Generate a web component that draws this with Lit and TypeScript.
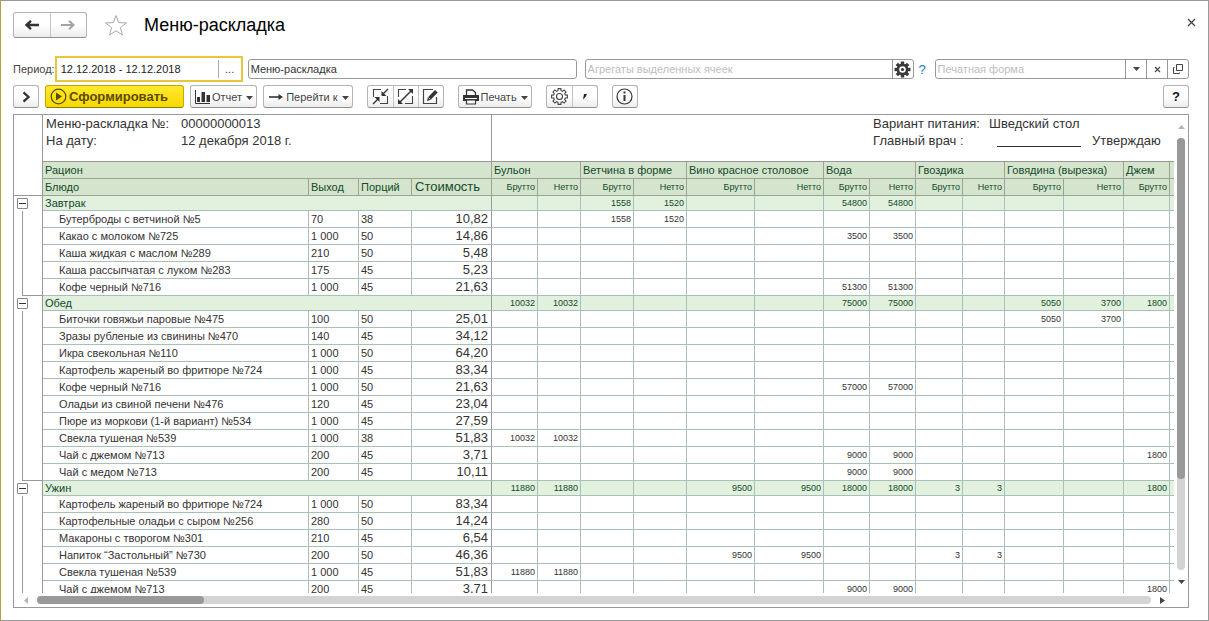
import { LitElement, html, svg, css, nothing } from "lit";
import { customElement, state } from "lit/decorators.js";

interface Dish {
  name: string;
  output: string;
  portions: string;
  cost: string;
  amounts?: Record<number, string>;
}

interface Meal {
  name: string;
  totals: Record<number, string>;
  dishes: Dish[];
}

const INGREDIENTS = [
  { name: "Бульон", span: 2 },
  { name: "Ветчина в форме", span: 2 },
  { name: "Вино красное столовое", span: 2 },
  { name: "Вода", span: 2 },
  { name: "Гвоздика", span: 2 },
  { name: "Говядина (вырезка)", span: 2 },
  { name: "Джем", span: 1 },
];

const AMOUNT_WIDTHS = [46, 43, 53, 53, 68, 69, 46, 46, 47, 42, 59, 60, 46];
const COLUMN_WIDTHS = [29, 266, 50, 53, 80, ...AMOUNT_WIDTHS];

const dish = (
  name: string,
  output: string,
  portions: string,
  cost: string,
  amounts: Record<number, string> = {}
): Dish => ({ name, output, portions, cost, amounts });

const MEALS: Meal[] = [
  {
    name: "Завтрак",
    totals: { 2: "1558", 3: "1520", 6: "54800", 7: "54800" },
    dishes: [
      dish("Бутерброды с ветчиной №5", "70", "38", "10,82", { 2: "1558", 3: "1520" }),
      dish("Какао с молоком №725", "1 000", "50", "14,86", { 6: "3500", 7: "3500" }),
      dish("Каша жидкая с маслом №289", "210", "50", "5,48"),
      dish("Каша рассыпчатая с луком №283", "175", "45", "5,23"),
      dish("Кофе черный №716", "1 000", "45", "21,63", { 6: "51300", 7: "51300" }),
    ],
  },
  {
    name: "Обед",
    totals: { 0: "10032", 1: "10032", 6: "75000", 7: "75000", 10: "5050", 11: "3700", 12: "1800" },
    dishes: [
      dish("Биточки говяжьи паровые №475", "100", "50", "25,01", { 10: "5050", 11: "3700" }),
      dish("Зразы рубленые из свинины №470", "140", "45", "34,12"),
      dish("Икра свекольная №110", "1 000", "50", "64,20"),
      dish("Картофель жареный во фритюре №724", "1 000", "45", "83,34"),
      dish("Кофе черный №716", "1 000", "50", "21,63", { 6: "57000", 7: "57000" }),
      dish("Оладьи из свиной печени №476", "120", "45", "23,04"),
      dish("Пюре из моркови (1-й вариант) №534", "1 000", "45", "27,59"),
      dish("Свекла тушеная №539", "1 000", "38", "51,83", { 0: "10032", 1: "10032" }),
      dish("Чай с джемом №713", "200", "45", "3,71", { 6: "9000", 7: "9000", 12: "1800" }),
      dish("Чай с медом №713", "200", "45", "10,11", { 6: "9000", 7: "9000" }),
    ],
  },
  {
    name: "Ужин",
    totals: { 0: "11880", 1: "11880", 4: "9500", 5: "9500", 6: "18000", 7: "18000", 8: "3", 9: "3", 12: "1800" },
    dishes: [
      dish("Картофель жареный во фритюре №724", "1 000", "50", "83,34"),
      dish("Картофельные оладьи с сыром №256", "280", "50", "14,24"),
      dish("Макароны с творогом №301", "210", "45", "6,54"),
      dish("Напиток “Застольный” №730", "200", "50", "46,36", { 4: "9500", 5: "9500", 8: "3", 9: "3" }),
      dish("Свекла тушеная №539", "1 000", "45", "51,83", { 0: "11880", 1: "11880" }),
      dish("Чай с джемом №713", "200", "45", "3,71", { 6: "9000", 7: "9000", 12: "1800" }),
    ],
  },
];

const icon = (w: number, h: number, body: unknown) =>
  html`<svg width=${w} height=${h} viewBox="0 0 ${w} ${h}" fill="none" aria-hidden="true">${body}</svg>`;

const teeth = (cx: number, cy: number, r: number, w: number, h: number, fill: string) =>
  [0, 45, 90, 135, 180, 225, 270, 315].map(
    (a) => svg`<rect x=${cx - w / 2} y=${cy - r} width=${w} height=${h} fill=${fill} transform="rotate(${a} ${cx} ${cy})"/>`
  );

const gearOutline = () => {
  const pts: string[] = [];
  for (let i = 0; i < 8; i++) {
    for (const [off, r] of [[-15, 6], [-10, 8], [10, 8], [15, 6]]) {
      const a = ((i * 45 + off - 90) * Math.PI) / 180;
      pts.push(`${(8.5 + r * Math.cos(a)).toFixed(2)},${(8.5 + r * Math.sin(a)).toFixed(2)}`);
    }
  }
  return pts.join(" ");
};

const ICONS = {
  back: icon(16, 12, svg`<path d="M15 6H3M7 1.8 2.5 6 7 10.2" stroke="#333" stroke-width="2.4"/>`),
  forward: icon(16, 12, svg`<path d="M1 6h12M9 1.8 13.5 6 9 10.2" stroke="#a3a3a3" stroke-width="2"/>`),
  star: icon(24, 22, svg`<path d="M12 1.5 14.7 8.6l7.8.3-6.1 4.8 2.1 7.3L12 16.8 5.500 21l2.100-7.300L1.500 8.900l7.800-.3z" stroke="#a8a8a8"/>`),
  close: icon(9, 9, svg`<path d="m1 1 7 7M8 1 1 8" stroke="#444" stroke-width="1.3"/>`),
  closeSmall: icon(7, 7, svg`<path d="m1 1 5 5M6 1 1 6" stroke="#444" stroke-width="1.1"/>`),
  caret: icon(7, 4, svg`<path d="M0 0h7L3.5 4z" fill="#444"/>`),
  open: icon(10, 10, svg`<path d="M3.5.5h6v6h-6zM1.5 3.5h-1v6h6v-1" stroke="#444"/>`),
  gearSolid: icon(
    17,
    17,
    svg`${teeth(8.5, 8.5, 8, 3.4, 4, "#3a3a3a")}<circle cx="8.5" cy="8.5" r="4.6" stroke="#3a3a3a" stroke-width="2.6"/><circle cx="8.5" cy="8.5" r="1.6" fill="#3a3a3a"/>`
  ),
  gear: icon(17, 17, svg`<polygon points=${gearOutline()} stroke="#444" stroke-width="1.1"/><circle cx="8.5" cy="8.5" r="3" stroke="#444" stroke-width="1.1"/>`),
  chevron: icon(9, 12, svg`<path d="m1.5 1.3 5 4.7-5 4.7" stroke="#333" stroke-width="2.3"/>`),
  play: icon(17, 17, svg`<circle cx="8.5" cy="8.5" r="7.3" stroke="#5c5210" stroke-width="1.3"/><path d="M6 4.5 12 8.5 6 12.5z" fill="#5c4a00"/>`),
  chart: icon(17, 14, svg`<path d="M1.5 0v13.5H16" stroke="#333"/><path d="M3 7h3v5H3zM7.5 2H11v10H7.500zM12.5 5H16v7h-3.500z" fill="#333"/>`),
  arrow: icon(18, 8, svg`<path d="M2 4h11" stroke="#333" stroke-width="1.6"/><path d="M11.5 1 16 4 11.5 7z" fill="#333"/>`),
  collapse: icon(
    17,
    17,
    svg`<path d="M9 1.5H1.500V9M15.5 8v7.500H8" stroke="#444" stroke-width="1.1"/><path d="M16 1 11 6M1 16 6 11" stroke="#333" stroke-width="1.4"/><path d="M9.500 3v5h5zM7.500 14V9h-5z" fill="#333"/>`
  ),
  expand: icon(
    17,
    17,
    svg`<path d="M9 1.5H1.500V9M15.5 8v7.500H8" stroke="#444" stroke-width="1.1"/><path d="M3 14 14 3" stroke="#333" stroke-width="1.4"/><path d="M11 1h5v5zM1 11v5h5z" fill="#333"/>`
  ),
  edit: icon(
    17,
    17,
    svg`<path d="M11 1.5H1.500v14h13V9" stroke="#444" stroke-width="1.2"/><path d="m5 13 1-3.800L13 2l2.700 2.500-7 7.300z" fill="#333"/><path d="m6.300 9.300 2.200 2.200" stroke="#fff" stroke-width=".7"/>`
  ),
  printer: icon(
    18,
    16,
    svg`<path d="M4.500 6V1h6l3 2.500V6" stroke="#333" stroke-width="1.3"/><path d="M1 6h16v6H1z" fill="#333"/><path d="M3 9.500h12" stroke="#fff"/><path d="M4.500 11h9v4h-9z" fill="#fff" stroke="#333" stroke-width="1.2"/>`
  ),
  tick: icon(4, 6, svg`<path d="M1 0h3L2.500 3 0 5.500z" fill="#222"/>`),
  info: icon(17, 17, svg`<circle cx="8.5" cy="8.5" r="7.5" stroke="#333" stroke-width="1.2"/><path d="M7.500 3.500h2v2h-2zM7.500 7h2v6h-2z" fill="#333"/>`),
  up: icon(7, 4, svg`<path d="M0 4h7L3.500 0z" fill="#b5b5b5"/>`),
  left: icon(4, 7, svg`<path d="M4 0v7L0 3.500z" fill="#b5b5b5"/>`),
  right: icon(5, 7, svg`<path d="M0 0v7L5 3.500z" fill="#444"/>`),
};

@customElement("app-root")
export class AppRoot extends LitElement {
  static styles = css`
    :host {
      display: block;
      height: 100vh;
      font-family: "Liberation Sans", Arial, sans-serif;
      font-size: 11px;
      color: #444;
    }
    *,
    *::before {
      box-sizing: border-box;
    }
    svg {
      display: block;
      flex: none;
    }
    button,
    input {
      font: inherit;
      color: inherit;
      margin: 0;
      padding: 0;
    }
    button {
      display: flex;
      align-items: center;
      justify-content: center;
      border: 0;
      background: none;
      white-space: nowrap;
    }
    input {
      border: 0;
      outline: 0;
      background: none;
      min-width: 0;
      flex: 1;
      padding: 0 2px;
      height: 100%;
    }
    input::placeholder {
      color: #bdbdbd;
      opacity: 1;
    }
    .window {
      display: flex;
      flex-direction: column;
      height: 100%;
      background: #fff;
      border: 1px solid #9a9a9a;
      border-left-color: #b3a33a;
      padding: 11px 19px 12px 12px;
    }
    .title-bar {
      display: flex;
      align-items: center;
      height: 26px;
    }
    .title-bar h1 {
      flex: 1;
      margin: 0 0 0 16px;
      font-size: 18px;
      font-weight: 400;
      line-height: 26px;
      color: #000;
    }
    .star {
      margin-left: 17px;
    }
    .close {
      width: 15px;
      height: 15px;
      margin: 0 -10px 6px 0;
    }
    .group {
      display: flex;
      border: 1px solid #b4b4b4;
      border-bottom-color: #8f8f8f;
      border-radius: 3px;
      background: linear-gradient(#fff 50%, #ececec);
    }
    .group button + button {
      border-left: 1px solid #c4c4c4;
    }
    .nav {
      height: 26px;
      width: 74px;
    }
    .nav button {
      flex: 1;
    }
    .fields {
      display: flex;
      align-items: center;
      height: 26px;
      margin-top: 18px;
    }
    .field {
      display: flex;
      align-items: stretch;
      height: 20px;
      border: 1px solid #999;
      border-radius: 3px;
      min-width: 0;
    }
    .field button {
      width: 21px;
      border-left: 1px solid #999;
    }
    .period {
      width: 188px;
      height: 26px;
      margin-right: 5px;
      border: 2px solid #e6c73c;
      border-radius: 0;
      padding: 2px 0;
    }
    .period input {
      padding-left: 4px;
      color: #222;
    }
    .period button {
      width: 23px;
      height: 18px;
      border-color: #aaa;
    }
    .variant {
      flex: 329 1 0;
      margin-right: 8px;
      color: #333;
    }
    .totals {
      flex: 329 1 0;
    }
    .form {
      flex: 254 1 0;
    }
    .hint {
      width: 21px;
      padding-right: 4px;
      color: #1a78b8;
      font-size: 13px;
    }
    .tools {
      display: flex;
      align-items: center;
      gap: 6px;
      height: 23px;
      margin: 3px 0 6px;
    }
    .tools .group {
      height: 23px;
    }
    .tools button {
      width: 25px;
    }
    .tools .single button {
      width: 24px;
    }
    .tools .menu {
      width: auto;
      gap: 1px;
      padding: 0 3px;
    }
    .tools .menu svg:last-child {
      margin: 3px 0 0 3px;
    }
    .apart {
      margin-left: 8px;
    }
    .primary {
      border-color: #c9a800;
      border-bottom-color: #8f7a10;
      background: linear-gradient(#ffe92e, #f7d800);
      color: #5c4a00;
      font-size: 13px;
      font-weight: 700;
    }
    .tools .primary button {
      width: 137px;
      gap: 2px;
      padding: 0 4px;
      justify-content: flex-start;
    }
    .help {
      margin-left: auto;
      color: #111;
      font-size: 13px;
      font-weight: 700;
    }
    .sheet {
      flex: 1;
      min-height: 0;
      display: grid;
      grid-template-columns: minmax(0, 1fr) 14px;
      grid-template-rows: minmax(0, 1fr) 14px;
      border: 1px solid #999;
    }
    .view {
      overflow: hidden;
    }
    table {
      width: 100%;
      table-layout: fixed;
      border-collapse: separate;
      border-spacing: 0;
      color: #333;
    }
    th,
    td {
      padding: 0 2px;
      height: 17px;
      line-height: 16px;
      font-weight: 400;
      text-align: left;
      white-space: nowrap;
      overflow: hidden;
      border: 0 solid #a9bfba;
      border-width: 0 1px 1px 0;
    }
    .caption th {
      height: 47px;
      padding: 0 3px;
      vertical-align: top;
      font-size: 13px;
      line-height: 17px;
      border-color: #999;
    }
    .caption .open {
      border-right: 0;
    }
    .caption-grid {
      display: grid;
      grid-template-columns: 135px 1fr;
    }
    .caption-grid.right {
      grid-template-columns: 116px 1fr;
    }
    .sign {
      display: flex;
      gap: 11px;
      padding-left: 8px;
    }
    .sign i {
      width: 84px;
      height: 15px;
      border-bottom: 1px solid #333;
    }
    .head th {
      background: #d5e5cd;
      color: #124a2b;
      border-color: #9ba392;
    }
    .head .wide {
      padding-left: 3px;
      font-size: 13px;
    }
    .meal td {
      height: 15px;
      line-height: 14px;
      background: #e2f0de;
      color: #124a2b;
    }
    .meal .name {
      border-right-color: #999;
    }
    .dish {
      padding-left: 16px;
    }
    td.cost {
      padding-right: 3px;
      font-size: 13px;
      text-align: right;
      border-right-color: #999;
    }
    td.amount,
    th.amount {
      font-size: 9px;
      text-align: right;
    }
    .rest,
    .head .rest {
      border-right: 0;
      padding: 0;
    }
    td.tree,
    th.tree,
    .head th.tree {
      padding: 0;
      background: #fff;
      border-color: #999;
      border-bottom-width: 0;
    }
    .head th.tree {
      border-bottom-width: 1px;
    }
    td.tree {
      background: linear-gradient(#999, #999) 8px 0 / 1px 100% no-repeat #fff;
    }
    tr:last-child td.tree {
      background:
        linear-gradient(#999, #999) 8px 0 / 1px 100% no-repeat,
        linear-gradient(#999, #999) 8px 100% / 20px 1px no-repeat #fff;
    }
    .meal td.tree {
      background: #fff;
    }
    .toggle {
      width: 11px;
      height: 11px;
      margin-left: 3px;
      border: 1px solid #888;
      border-radius: 1px;
    }
    .toggle::before {
      content: "";
      width: 7px;
      height: 1px;
      background: #333;
    }
    .bar {
      display: flex;
      align-items: center;
    }
    .bar.vertical {
      flex-direction: column;
    }
    .bar button {
      width: 23px;
      height: 14px;
    }
    .bar.vertical button {
      width: 14px;
      height: 23px;
    }
    .track {
      flex: 1;
      height: 8px;
      border-radius: 4px;
      background: #d4d4d4;
    }
    .vertical .track {
      width: 8px;
      height: auto;
    }
    .thumb {
      width: 15%;
      height: 8px;
      border-radius: 4px;
      background: #999;
    }
    .vertical .thumb {
      width: 8px;
      height: 79%;
    }
  `;

  @state() private collapsed: string[] = [];

  firstUpdated() {
    const period = this.renderRoot.querySelector<HTMLInputElement>("#period");
    period?.focus();
    period?.setSelectionRange(period.value.length, period.value.length);
  }

  private toggle(name: string) {
    this.collapsed = this.collapsed.includes(name)
      ? this.collapsed.filter((n) => n !== name)
      : [...this.collapsed, name];
  }

  private amounts(values: Record<number, string> = {}) {
    return html`${AMOUNT_WIDTHS.map((_, i) => html`<td class="amount">${values[i] ?? nothing}</td>`)}
      <td class="rest"></td>`;
  }

  private meal(meal: Meal) {
    const closed = this.collapsed.includes(meal.name);
    return html`<tbody>
      <tr class="meal">
        <td class="tree">
          <button class="toggle" aria-label="Свернуть ${meal.name}" aria-expanded=${closed ? "false" : "true"} @click=${() => this.toggle(meal.name)}></button>
        </td>
        <td class="name" colspan="4">${meal.name}</td>
        ${this.amounts(meal.totals)}
      </tr>
      ${closed
        ? nothing
        : meal.dishes.map(
            (d) => html`<tr>
              <td class="tree"></td>
              <td class="dish">${d.name}</td>
              <td>${d.output}</td>
              <td>${d.portions}</td>
              <td class="cost">${d.cost}</td>
              ${this.amounts(d.amounts)}
            </tr>`
          )}
    </tbody>`;
  }

  private sheet() {
    return html`<table>
      <colgroup>
        ${COLUMN_WIDTHS.map((w) => html`<col style="width:${w}px" />`)}
        <col />
      </colgroup>
      <thead>
        <tr class="caption">
          <th class="tree"></th>
          <th colspan="4">
            <div class="caption-grid">
              <span>Меню-раскладка №:</span><span>00000000013</span>
              <span>На дату:</span><span>12 декабря 2018 г.</span>
            </div>
          </th>
          <th class="open" colspan="7"></th>
          <th class="open" colspan="7">
            <div class="caption-grid right">
              <span>Вариант питания:</span><span>Шведский стол</span>
              <span>Главный врач :</span><span class="sign"><i></i>Утверждаю</span>
            </div>
          </th>
        </tr>
        <tr class="head">
          <th class="tree" rowspan="2"></th>
          <th colspan="4">Рацион</th>
          ${INGREDIENTS.map((g) => html`<th colspan=${g.span}>${g.name}</th>`)}
          <th class="rest"></th>
        </tr>
        <tr class="head">
          <th>Блюдо</th>
          <th>Выход</th>
          <th>Порций</th>
          <th class="wide">Стоимость</th>
          ${AMOUNT_WIDTHS.map((_, i) => html`<th class="amount">${i % 2 ? "Нетто" : "Брутто"}</th>`)}
          <th class="rest"></th>
        </tr>
      </thead>
      ${MEALS.map((m) => this.meal(m))}
    </table>`;
  }

  render() {
    return html`<main class="window">
      <header class="title-bar">
        <div class="group nav">
          <button aria-label="Назад">${ICONS.back}</button>
          <button aria-label="Вперед">${ICONS.forward}</button>
        </div>
        <button class="star" aria-label="В избранное">${ICONS.star}</button>
        <h1>Меню-раскладка</h1>
        <button class="close" aria-label="Закрыть">${ICONS.close}</button>
      </header>

      <div class="fields">
        <label for="period">Период:</label>
        <div class="field period">
          <input id="period" value="12.12.2018 - 12.12.2018" />
          <button aria-label="Выбрать период">...</button>
        </div>
        <div class="field variant">
          <input aria-label="Вариант отчета" value="Меню-раскладка" />
        </div>
        <div class="field totals">
          <input aria-label="Агрегаты" placeholder="Агрегаты выделенных ячеек" />
          <button aria-label="Настройка агрегатов">${ICONS.gearSolid}</button>
        </div>
        <button class="hint">?</button>
        <div class="field form">
          <input aria-label="Форма" placeholder="Печатная форма" />
          <button aria-label="Список">${ICONS.caret}</button>
          <button aria-label="Очистить">${ICONS.closeSmall}</button>
          <button aria-label="Открыть">${ICONS.open}</button>
        </div>
      </div>

      <div class="tools">
        <div class="group single"><button aria-label="Развернуть">${ICONS.chevron}</button></div>
        <div class="group primary"><button>${ICONS.play}Сформировать</button></div>
        <div class="group"><button class="menu">${ICONS.chart}Отчет${ICONS.caret}</button></div>
        <div class="group"><button class="menu">${ICONS.arrow}Перейти к${ICONS.caret}</button></div>
        <div class="group apart">
          <button aria-label="Свернуть группы">${ICONS.collapse}</button>
          <button aria-label="Развернуть группы">${ICONS.expand}</button>
          <button aria-label="Редактировать">${ICONS.edit}</button>
        </div>
        <div class="group apart"><button class="menu">${ICONS.printer}Печать${ICONS.caret}</button></div>
        <div class="group apart">
          <button aria-label="Настройки">${ICONS.gear}</button>
          <button aria-label="Варианты">${ICONS.tick}</button>
        </div>
        <div class="group single apart"><button aria-label="Сведения">${ICONS.info}</button></div>
        <div class="group single help"><button>?</button></div>
      </div>

      <section class="sheet">
        <div class="view">${this.sheet()}</div>
        <div class="bar vertical">
          <button aria-label="Вверх">${ICONS.up}</button>
          <div class="track"><div class="thumb"></div></div>
          <button aria-label="Вниз">${ICONS.caret}</button>
        </div>
        <div class="bar">
          <button aria-label="Влево">${ICONS.left}</button>
          <div class="track"><div class="thumb"></div></div>
          <button aria-label="Вправо">${ICONS.right}</button>
        </div>
      </section>
    </main>`;
  }
}
